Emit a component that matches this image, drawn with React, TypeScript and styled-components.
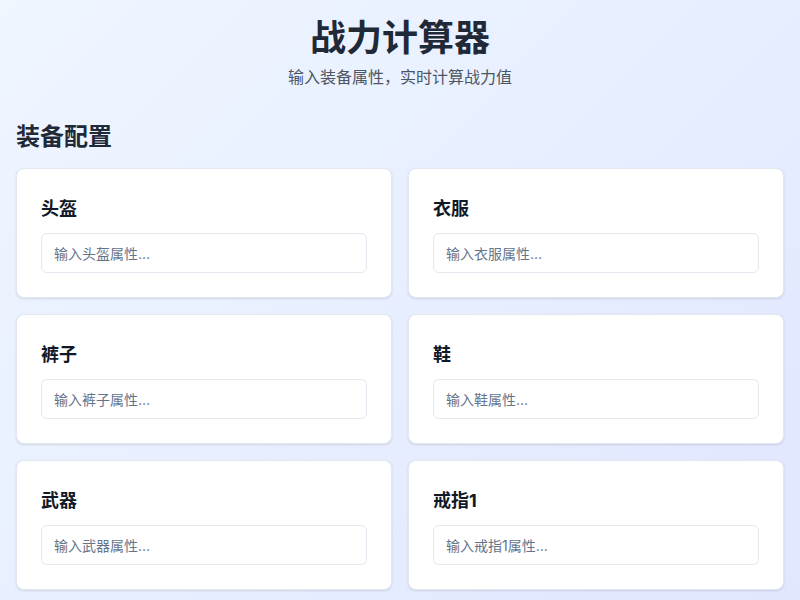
import React from 'react';
import styled, { createGlobalStyle } from 'styled-components';

const slots = ['头盔', '衣服', '裤子', '鞋', '武器', '戒指1'];

const GlobalStyle = createGlobalStyle`
  * {
    box-sizing: border-box;
  }
  html, body {
    margin: 0;
    padding: 0;
  }
  body {
    font-family: Inter, "Noto Sans CJK SC", sans-serif;
    background: linear-gradient(135deg, #eff6ff 0%, #e0e7ff 100%);
    min-height: 100vh;
  }
`;

function App() {
  return (
    <>
      <GlobalStyle />
      <Container>
        <Header>
          <Title>战力计算器</Title>
          <Subtitle>输入装备属性，实时计算战力值</Subtitle>
        </Header>
        <Section>
          <SectionTitle>装备配置</SectionTitle>
          <Grid>
            {slots.map((slot) => (
              <Card key={slot}>
                <Label>{slot}</Label>
                <Input placeholder={`输入${slot}属性...`} />
              </Card>
            ))}
          </Grid>
        </Section>
      </Container>
    </>
  );
}

const Container = styled.div`
  padding: 16px;
  height: 600px;
  overflow: hidden;
`;

const Header = styled.header`
  display: flex;
  flex-direction: column;
  align-items: center;
  margin-bottom: 32px;
`;

const Title = styled.h1`
  margin: 0;
  font-size: 36px;
  line-height: 44px;
  font-weight: 700;
  color: #1f2937;
`;

const Subtitle = styled.p`
  margin: 5px 0 0;
  font-size: 16px;
  line-height: 24px;
  color: #4b5563;
`;

const Section = styled.section`
  display: flex;
  flex-direction: column;
`;

const SectionTitle = styled.h2`
  margin: 0 0 15px;
  font-size: 24px;
  line-height: 32px;
  font-weight: 700;
  color: #1f2937;
`;

const Grid = styled.div`
  display: grid;
  grid-template-columns: 1fr 1fr;
  column-gap: 16px;
  row-gap: 16px;
`;

const Card = styled.div`
  display: flex;
  flex-direction: column;
  padding: 26px 24px 24px;
  background: #ffffff;
  border: 1px solid #e2e8f0;
  border-radius: 8px;
  box-shadow: 0 1px 3px rgba(0, 0, 0, 0.08), 0 1px 2px rgba(0, 0, 0, 0.04);
`;

const Label = styled.label`
  margin-bottom: 11px;
  font-size: 18px;
  line-height: 27px;
  font-weight: 700;
  color: #111827;
`;

const Input = styled.input`
  height: 40px;
  padding: 0 12px;
  border: 1px solid #e2e8f0;
  border-radius: 6px;
  font-family: Inter, "Noto Sans CJK SC", sans-serif;
  font-size: 14px;
  color: #1f2937;
  background: #ffffff;
  outline: none;

  &::placeholder {
    color: #64748b;
  }
`;

export default App;
